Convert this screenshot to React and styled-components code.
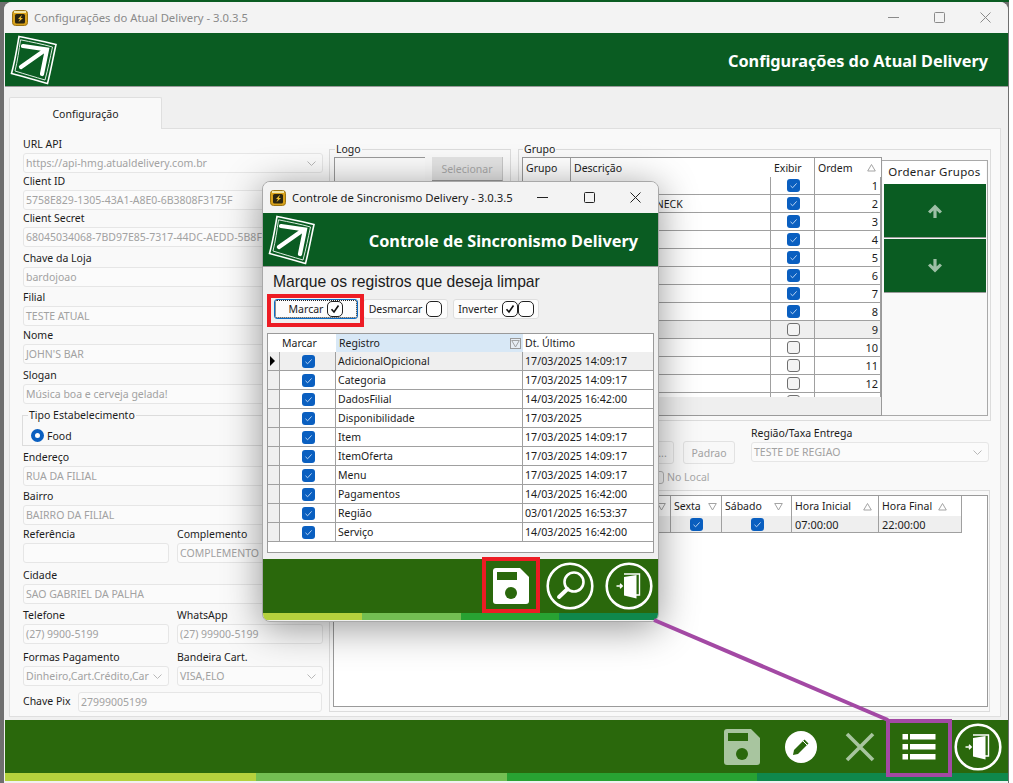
import React from 'react';
import styled, { createGlobalStyle } from 'styled-components';

const Global = createGlobalStyle`
  html, body { margin: 0; padding: 0; background: #fff; }
  * { box-sizing: border-box; }
  body { font-family: "Noto Sans", "Liberation Sans", sans-serif; font-size: 10.5px; color: #1c1c1c; }
`;

const Screen = styled.div`
  position: relative; width: 1013px; height: 783px; overflow: hidden; background: #fff;
  display: flex; align-items: stretch;
`;
const Desktop = styled.div`
  width: 1009px; height: 783px; background: #6f6f6f; display: flex; flex-direction: column;
  padding-left: 4px; border-top: 2px solid #0a5c22;
`;
const Win = styled.div`
  flex: 1; width: 1004px; background: #f0f0f0; display: flex; flex-direction: column;
  border-top-left-radius: 8px; border-top-right-radius: 8px; overflow: hidden;
`;
const TitleBar = styled.div`
  height: ${p => p.$h}px; flex: none; background: ${p => p.$bg}; display: flex; align-items: center;
  padding-left: ${p => p.$pl}px; gap: 6px; font-size: 11.3px; color: ${p => p.$color}; font-family: "Noto Sans", sans-serif;
`;
const TitleText = styled.span` flex: 1; white-space: nowrap; `;
const WinButtons = styled.div` display: flex; height: 100%; `;
const WinBtn = styled.div`
  width: ${p => p.$w}px; display: flex; align-items: center; justify-content: center; color: ${p => p.$color};
`;
const Banner = styled.div`
  height: 54px; flex: none; background: #0a5c22; display: flex; align-items: center; justify-content: space-between;
  padding: 0 20px 0 ${p => p.$pl}px; margin-left: ${p => p.$ml || 0}px; border-bottom: 1px solid #9a9a9a;
`;
const BannerTitle = styled.div`
  color: #fff; font-family: "Noto Sans", sans-serif; font-weight: 700; font-size: ${p => p.$size}px; white-space: nowrap;
  padding-top: ${p => p.$pt}px;
`;
const Content = styled.div`
  flex: 1; display: flex; flex-direction: column; padding: 10px 7px 3px 5px; min-height: 0;
`;
const Tabs = styled.div` display: flex; height: 31px; flex: none; `;
const Tab = styled.div`
  width: 153px; height: 32px; background: #f9f9f9; border: 1px solid #dfdfdf; border-bottom: none; border-radius: 2px 2px 0 0;
  display: flex; align-items: center; justify-content: center; color: #222; z-index: 1;
`;
const Panel = styled.div`
  flex: 1; background: #f9f9f9; border: 1px solid #dfdfdf; display: grid;
  grid-template-columns: 301px 662px; column-gap: 6px; padding: 8px 0 0 12px; min-height: 0;
`;
const LeftCol = styled.div` display: flex; flex-direction: column; `;
const Field = styled.div`
  display: flex; flex-direction: column; margin-top: ${p => p.$mt || 0}px; width: ${p => p.$w ? p.$w + 'px' : 'auto'}; min-width: 0;
`;
const Label = styled.label`
  height: 16px; line-height: 14px; padding-left: 1px; white-space: nowrap; color: #1c1c1c;
`;
const InputBox = styled.div`
  height: 20px; background: #fbfbfb; border: 1px solid #e6e6e6; border-radius: 3px; display: flex; align-items: center;
  justify-content: space-between; padding: 0 6px 0 2px; color: #a2a2a2; white-space: nowrap; overflow: hidden; flex: none; min-width: 0; margin-left: 1px;
`;
const TwoCols = styled.div`
  display: grid; grid-template-columns: 147px 147px; column-gap: 7px; margin-top: ${p => p.$mt}px;
`;
const PixRow = styled.div`
  display: grid; grid-template-columns: 55px 245px; height: 20px; margin-top: 6px; align-items: center;
`;
const Chevron = styled.svg` flex: none; width: 9px; height: 5px; margin-left: 3px; `;
const Group = styled.fieldset`
  margin: ${p => p.$mt || 0}px 0 0 0; padding: ${p => p.$pad || '0 2px 2px 3px'}; border: 1px solid #dcdcdc; min-width: 0; height: ${p => p.$h}px; width: ${p => p.$w ? p.$w + 'px' : 'auto'};
  display: ${p => p.$flex ? 'flex' : 'block'}; gap: 7px;
`;
const Legend = styled.legend`
  padding: 0 1px; margin-left: ${p => p.$ml ?? 2}px; line-height: 13px; height: 13px; color: #1c1c1c; margin-bottom: ${p => p.$mb ?? 1}px;
`;
const RadioRow = styled.div` display: flex; align-items: center; gap: 3px; padding-left: 8px; height: 15px; `;
const Radio = styled.span`
  width: 13px; height: 13px; border-radius: 50%; border: 4px solid #0a5fc0; background: #fff; display: inline-block;
`;
const RightCol = styled.div` display: flex; flex-direction: column; min-width: 0; padding-top: 6px;`;
const TopRow = styled.div` display: flex; gap: 7px; `;
const LogoPreview = styled.div`
  width: 91px; height: 40px; background: #fbfbfb; border-top: 1px solid #9a9a9a; border-left: 1px solid #9a9a9a; flex: none;
`;
const SelectBtn = styled.div`
  width: 71px; height: 24px; background: #e4e4e4; color: #a8a8a8; border-bottom: 1px solid #9a9a9a; border-right: 1px solid #c8c8c8; display: flex; align-items: center; justify-content: center; flex: none;
`;
const GrupoWrap = styled.div` display: flex; height: 259px; `;
const GridBox = styled.div`
  width: ${p => p.$w}px; background: ${p => p.$bg || '#fff'}; border: 1px solid #9a9a9a; display: flex; flex-direction: column; overflow: hidden; flex: none; height: ${p => p.$h ? p.$h + 'px' : 'auto'};
  margin-top: ${p => p.$mt || 0}px;
`;
const GroupRows = styled.div` flex: none; height: 220px; overflow: hidden; background: #fff; `;
const Row = styled.div`
  display: grid; grid-template-columns: ${p => p.$cols}; height: ${p => p.$h}px; flex: none; background: ${p => p.$bg || 'transparent'}; width: ${p => p.$w ? p.$w + 'px' : 'auto'};
`;
const Cell = styled.div`
  display: flex; align-items: center; justify-content: ${p => p.$align || 'flex-start'};
  padding: 0 ${p => p.$pr ?? 2}px 0 ${p => p.$pl ?? 3}px; white-space: nowrap; overflow: hidden; position: relative;
  border-right: ${p => p.$noline ? 'none' : (p.$head && !p.$line ? 'none' : '1px solid #a0a0a0')};
  border-bottom: ${p => p.$head ? 'none' : '1px solid #a0a0a0'};
  background: ${p => p.$bg || 'transparent'}; color: #1c1c1c; font-size: ${p => p.$fs || 10.5}px;
`;
const HeadCell = styled(Cell).attrs({ $head: true })` justify-content: ${p => p.$align || 'space-between'}; `;
const Fill = styled.div` flex: 1; background: #efefef; `;
const SideBox = styled.div`
  flex: 1; border: 1px solid #a9a9a9; border-left: none; background: #f9f9f9; margin-top: 3px; display: flex; flex-direction: column;
`;
const SideTitle = styled.div`
  height: 23px; display: flex; align-items: center; justify-content: center; background: #fff; font-size: 11.5px; letter-spacing: .3px; margin: 0 1px;
  white-space: nowrap; flex: none; padding-bottom: 2px;
`;
const SideBtn = styled.div`
  height: 54px; background: #0a5c22; border-bottom: 1px solid #9a9a9a; margin: 0 1px 1px 2px; display: flex; align-items: center; justify-content: center; flex: none;
`;
const MidRow = styled.div`
  display: flex; justify-content: flex-end; gap: 15px; height: 69px; padding: 5px 2px 0 0; flex: none;
`;
const MidCol = styled.div` display: flex; flex-direction: column; width: 84px; `;
const MidBtns = styled.div` display: flex; gap: 9px; margin-top: 15px; `;
const GhostBtn = styled.div`
  width: ${p => p.$w}px; height: 23px; background: #f8f8f8; border: 1px solid #e2e2e2; border-radius: 3px; display: flex; align-items: center; justify-content: center; color: #a2a2a2; flex: none;
`;
const LocalRow = styled.div` display: flex; align-items: center; gap: 3px; color: #a8a8a8; margin-top: 6px; `;
const SmallBox = styled.span`
  width: 13px; height: 13px; border-radius: 3px; border: 1px solid #b8b8b8; display: inline-block; background: #f7f7f7; flex: none;
`;
const BottomBox = styled.div` height: 222px; border: 1px solid #dcdcdc; padding: 4px 1px 4px 3px; flex: none; width: 661px; `;
const Footer = styled.div`
  height: ${p => p.$h}px; flex: none; background: #2a680c; display: flex; justify-content: flex-end; align-items: center;
  padding-right: ${p => p.$pr || 0}px; margin-left: ${p => p.$ml || 0}px;
`;
const Slot = styled.div` width: 59px; height: 100%; display: flex; align-items: center; justify-content: center; flex: none; `;
const Strip = styled.div` height: ${p => p.$h}px; flex: none; display: flex; margin-left: ${p => p.$ml || 0}px; `;
const StripPart = styled.div` flex: 1; background: ${p => p.$c}; `;

const Dialog = styled.div`
  position: absolute; left: 262px; top: 181px; width: 397px; height: 441px; background: #f0f0f0; border-radius: 8px; overflow: hidden;
  border: 1px solid #a8a8a8; box-shadow: 0 6px 38px rgba(0,0,0,.42); display: flex; flex-direction: column; z-index: 5; padding-bottom: 1px;
`;
const DialogBody = styled.div` flex: 1; padding: 4px 4px 6px 4px; display: flex; flex-direction: column; min-height: 0; `;
const Prompt = styled.div` font-family: "Liberation Sans", sans-serif; font-size: 15.7px; height: 22px; line-height: 22px; padding-left: 6px; color: #1c1c1c; `;
const Toolbar = styled.div` display: flex; gap: 5px; padding-left: 7px; margin-top: 6px; height: 20px; flex: none; `;
const ToolBtn = styled.div`
  width: ${p => p.$w}px; height: 20px; background: #fcfcfc; border: 1px solid ${p => p.$focus ? '#0a6cc8' : '#dedede'}; border-radius: 3px; display: flex; align-items: center; justify-content: center; gap: 4px;
  position: relative; color: #222; font-size: 10.5px; flex: none;
  ${p => p.$focus ? 'outline: 1px dotted #222; outline-offset: -2px;' : ''}
`;
const TickBox = styled.span`
  width: 16px; height: 16px; border: 1.6px solid #222; border-radius: 5px; display: inline-flex; align-items: center; justify-content: center; flex: none; background: #fff;
`;
const TickPair = styled.span` display: inline-flex; `;
const Mark = styled.div`
  position: absolute; left: ${p => p.$x}px; top: ${p => p.$y}px; width: ${p => p.$w}px; height: ${p => p.$h}px;
  border: ${p => p.$b}px solid ${p => p.$c}; z-index: ${p => p.$z}; pointer-events: none;
`;
const Leader = styled.svg` position: absolute; left: 640px; top: 600px; width: 270px; height: 140px; z-index: 6; pointer-events: none; `;
const Checked = styled.span`
  width: 13px; height: 13px; background: #0a5fc0; border-radius: 3px; display: inline-flex; align-items: center; justify-content: center; flex: none;
`;
const Unchecked = styled.span`
  width: 13px; height: 13px; background: #f4f4f4; border: 1px solid #6f6f6f; border-radius: 3px; display: inline-block; flex: none;
`;
const Indicator = styled.span`
  width: 0; height: 0; border-left: 5px solid #000; border-top: 5px solid transparent; border-bottom: 5px solid transparent; display: inline-block;
`;
const HeadFilter = styled.span` display: inline-flex; width: 11px; height: 11px; border: 1px solid #9a9a9a; align-items: center; justify-content: center; background: #e8eef4; `;

const CheckBox = ({ on }) => on ? (
  <Checked><svg width="9" height="9" viewBox="0 0 9 9"><path d="M1.5 4.8 3.6 6.8 7.6 2.4" fill="none" stroke="#b9d4f3" strokeWidth="1" /></svg></Checked>
) : <Unchecked />;
const Tick = () => <svg width="10" height="10" viewBox="0 0 10 10"><path d="M1.5 5.2 4 8 8.5 1.5" fill="none" stroke="#111" strokeWidth="1.6" /></svg>;
const Sort = ({ down }) => <svg width="9" height="9" viewBox="0 0 9 9"><path d={down ? 'M.7 1.5H8.3L4.5 8Z' : 'M.7 8H8.3L4.5 1.5Z'} fill="none" stroke="#9a9a9a" strokeWidth=".9" /></svg>;
const ChevronIcon = () => <Chevron viewBox="0 0 9 5"><path d="M.5.5 4.5 4.5 8.5.5" fill="none" stroke="#b8b8b8" /></Chevron>;

const AppIcon = () => (
  <svg width="16" height="16" viewBox="0 0 16 16" style={{ flex: 'none' }}>
    <rect x=".5" y=".5" width="15" height="15" rx="3" fill="#d9a21b" stroke="#9a7414" />
    <rect x="2" y="1" width="12" height="2" fill="#f4e7a6" />
    <rect x="3" y="4" width="10" height="9.5" rx="1.5" fill="#2b2510" />
    <path d="M10 4.8 6 9h2l-1.6 3.2L11 8H8.8Z" fill="#f0c030" />
  </svg>
);
const Logo = () => (
  <svg width="50" height="52" viewBox="0 0 50 52" style={{ flex: 'none' }}>
    <path d="M10 2.5C22 5 34 7 47 10.5 44 24 42 36 38.5 49.5 26 46 14 42.5 2.5 39.5 6 27 8 14 10 2.5Z" fill="none" stroke="#fff" strokeWidth="1.6" />
    <path d="M11.5 5.8C22 8 33 10 43.5 13 41 24 39 35 36 46 26 43 15.5 40 6 37 8.5 27 10 16 11.5 5.8Z" fill="none" stroke="#dfeee3" strokeWidth="1" />
    <path d="M12 33 35.5 16.5M14 12 38 15.5 33 40" fill="none" stroke="#fff" strokeWidth="4.2" strokeLinecap="round" strokeLinejoin="miter" />
  </svg>
);
const SaveIcon = ({ color, bg }) => (
  <svg width="36" height="36" viewBox="0 0 36 36">
    <path d="M3 0H27L36 9V33a3 3 0 0 1-3 3H3a3 3 0 0 1-3-3V3A3 3 0 0 1 3 0Z" fill={color} />
    <rect x="4" y="4" width="20" height="8" fill={bg} />
    <circle cx="18" cy="25" r="6" fill={bg} />
  </svg>
);
const Ring = ({ children }) => (
  <svg width="48" height="48" viewBox="0 0 48 48">
    <circle cx="24" cy="24" r="22.3" fill="none" stroke="#fff" strokeWidth="2.6" />
    {children}
  </svg>
);
const SearchIcon = () => (
  <Ring>
    <circle cx="28" cy="20" r="9.5" fill="none" stroke="#fff" strokeWidth="2.6" />
    <path d="M21.5 27 13 35" stroke="#fff" strokeWidth="4" strokeLinecap="round" />
  </Ring>
);
const ExitIcon = () => (
  <Ring>
    <path d="M19 12H34.5V33H31" fill="none" stroke="#fff" strokeWidth="1.4" />
    <path d="M19 15 31.5 13V36.5L19 33.5Z" fill="#fff" />
    <path d="M11.5 24H17M15 21.8 17.2 24 15 26.2" fill="none" stroke="#fff" strokeWidth="1.5" />
  </Ring>
);
const EditIcon = () => (
  <svg width="32" height="32" viewBox="0 0 32 32">
    <circle cx="16" cy="16" r="16" fill="#fff" />
    <path d="M19.5 8.5 23.5 12.5 13 23 8 24 9 19Z" fill="#2a680c" />
    <path d="M18 10 22 14" stroke="#fff" strokeWidth="1" />
  </svg>
);
const CloseIcon = () => (
  <svg width="30" height="30" viewBox="0 0 30 30"><path d="M2 2 28 28M28 2 2 28" stroke="#a8c59f" strokeWidth="3.6" /></svg>
);
const ListIcon = () => (
  <svg width="34" height="28" viewBox="0 0 34 28">
    {[1, 11, 21].map(y => (
      <g key={y} fill="#fff">
        <rect x="0.5" y={y} width="5.5" height="5.5" />
        <rect x="8" y={y} width="25.5" height="5.5" />
      </g>
    ))}
  </svg>
);
const Arrow = ({ down }) => (
  <svg width="16" height="16" viewBox="0 0 16 16" style={{ transform: down ? 'rotate(180deg)' : 'none' }}>
    <path d="M8 1.5 15 8.5 12.8 10.5 9.6 7.5V15H6.4V7.5L3.2 10.5 1 8.5Z" fill="#9dbfa6" />
  </svg>
);

const TextField = ({ label, value, mt, select, w }) => (
  <Field $mt={mt} $w={w}>
    <Label>{label}</Label>
    <InputBox><span>{value}</span>{select && <ChevronIcon />}</InputBox>
  </Field>
);

const groupCols = '48px 200px 44px 66px';
const groupRows = Array.from({ length: 13 }, (_, i) => i + 1);
const regs = [
  ['AdicionalOpicional', '17/03/2025 14:09:17'],
  ['Categoria', '17/03/2025 14:09:17'],
  ['DadosFilial', '14/03/2025 16:42:00'],
  ['Disponibilidade', '17/03/2025'],
  ['Item', '17/03/2025 14:09:17'],
  ['ItemOferta', '17/03/2025 14:09:17'],
  ['Menu', '17/03/2025 14:09:17'],
  ['Pagamentos', '14/03/2025 16:42:00'],
  ['Região', '03/01/2025 16:53:37'],
  ['Serviço', '14/03/2025 16:42:00'],
];
const regCols = '12px 56px 187px 130px';
const hourCols = '337px 51px 70px 87px 83px';

export default function App() {
  return (
    <Screen>
      <Global />
      <Desktop>
        <Win>
          <TitleBar $h={31} $bg="#f3f3f3" $pl={8} $color="#8a8a8a">
            <AppIcon />
            <TitleText>Configurações do Atual Delivery - 3.0.3.5</TitleText>
            <WinButtons>
              <WinBtn $w={46} $color="#8a8a8a"><svg width="11" height="11" viewBox="0 0 11 11"><path d="M0 5.5H11" stroke="currentColor" /></svg></WinBtn>
              <WinBtn $w={46} $color="#8a8a8a"><svg width="11" height="11" viewBox="0 0 11 11"><rect x=".5" y=".5" width="10" height="10" rx="1" fill="none" stroke="currentColor" /></svg></WinBtn>
              <WinBtn $w={46} $color="#8a8a8a"><svg width="11" height="11" viewBox="0 0 11 11"><path d="M.5.5 10.5 10.5M10.5.5.5 10.5" stroke="currentColor" /></svg></WinBtn>
            </WinButtons>
          </TitleBar>
          <Banner $pl={4} $ml={1}>
            <Logo />
            <BannerTitle $size={16.3} $pt={2}>Configurações do Atual Delivery</BannerTitle>
          </Banner>
          <Content>
            <Tabs><Tab>Configuração</Tab></Tabs>
            <Panel>
              <LeftCol>
                <TextField label="URL API" value="https://api-hmg.atualdelivery.com.br" select />
                <TextField label="Client ID" mt={1} value="5758E829-1305-43A1-A8E0-6B3808F3175F" />
                <TextField label="Client Secret" mt={1} value="68045034068-7BD97E85-7317-44DC-AEDD-5B8F" />
                <TextField label="Chave da Loja" mt={4} value="bardojoao" />
                <TextField label="Filial" mt={3} value="TESTE ATUAL" select />
                <TextField label="Nome" mt={2} value="JOHN'S BAR" />
                <TextField label="Slogan" mt={4} value="Música boa e cerveja gelada!" />
                <Group $mt={5} $h={37} $pad="0 2px 0 0">
                  <Legend $mb={6} $ml={5}>Tipo Estabelecimento</Legend>
                  <RadioRow><Radio />Food</RadioRow>
                </Group>
                <TextField label="Endereço" mt={4} value="RUA DA FILIAL" />
                <TextField label="Bairro" mt={3} value="BAIRRO DA FILIAL" />
                <TwoCols $mt={2}>
                  <TextField label="Referência" value=" " />
                  <TextField label="Complemento" value="COMPLEMENTO F" />
                </TwoCols>
                <TextField label="Cidade" mt={5} value="SAO GABRIEL DA PALHA" />
                <TwoCols $mt={4}>
                  <TextField label="Telefone" value="(27) 9900-5199" />
                  <TextField label="WhatsApp" value="(27) 99900-5199" />
                </TwoCols>
                <TwoCols $mt={6}>
                  <TextField label="Formas Pagamento" value="Dinheiro,Cart.Crédito,Car" select />
                  <TextField label="Bandeira Cart." value="VISA,ELO" select />
                </TwoCols>
                <PixRow>
                  <Label>Chave Pix</Label>
                  <InputBox>27999005199</InputBox>
                </PixRow>
              </LeftCol>
              <RightCol>
                <TopRow>
                  <Group $w={182} $h={278} $flex $pad="0 7px 0 4px">
                    <Legend $ml={1}>Logo</Legend>
                    <LogoPreview />
                    <SelectBtn>Selecionar</SelectBtn>
                  </Group>
                  <Group $w={473} $h={278}>
                    <Legend $ml={1}>Grupo</Legend>
                    <GrupoWrap>
                      <GridBox $w={360} $bg="#f0f0f0">
                        <Row $cols={groupCols} $h={19} $bg="#fff">
                          <HeadCell $line>Grupo</HeadCell>
                          <HeadCell>Descrição</HeadCell>
                          <HeadCell $line>Exibir</HeadCell>
                          <HeadCell $pr={5}>Ordem<Sort /></HeadCell>
                        </Row>
                        <GroupRows>
                          {groupRows.map(n => (
                            <Row key={n} $cols={groupCols} $h={18} $bg={n === 9 ? '#efefef' : '#fff'}>
                              <Cell />
                              <Cell>{n === 2 ? 'CERVEJAS LONG NECK' : ''}</Cell>
                              <Cell $align="center"><CheckBox on={n <= 8} /></Cell>
                              <Cell $align="flex-end" $fs={11}>{n < 13 ? n : ''}</Cell>
                            </Row>
                          ))}
                        </GroupRows>
                        <Fill />
                      </GridBox>
                      <SideBox>
                        <SideTitle>Ordenar Grupos</SideTitle>
                        <SideBtn><Arrow /></SideBtn>
                        <SideBtn><Arrow down /></SideBtn>
                      </SideBox>
                    </GrupoWrap>
                  </Group>
                </TopRow>
                <MidRow>
                  <MidCol>
                    <MidBtns>
                      <GhostBtn $w={23}>...</GhostBtn>
                      <GhostBtn $w={52}>Padrao</GhostBtn>
                    </MidBtns>
                    <LocalRow><SmallBox />No Local</LocalRow>
                  </MidCol>
                  <TextField label="Região/Taxa Entrega" value="TESTE DE REGIAO" select w={239} />
                </MidRow>
                <BottomBox>
                  <GridBox $w={655} $h={212}>
                    <Row $cols={hourCols} $h={20}>
                      <HeadCell $pr={4} $line $align="flex-end"><Sort down /></HeadCell>
                      <HeadCell $pr={4} $line>Sexta<Sort down /></HeadCell>
                      <HeadCell $pr={8} $line>Sábado<Sort down /></HeadCell>
                      <HeadCell $pr={6} $line>Hora Inicial<Sort /></HeadCell>
                      <HeadCell $pr={14} $line>Hora Final<Sort /></HeadCell>
                    </Row>
                    <Row $cols={hourCols} $h={17} $w={628}>
                      <Cell $bg="#efefef" />
                      <Cell $bg="#efefef" $align="center"><CheckBox on /></Cell>
                      <Cell $bg="#efefef" $align="center"><CheckBox on /></Cell>
                      <Cell $bg="#efefef" $fs={11}>07:00:00</Cell>
                      <Cell $bg="#efefef" $fs={11}>22:00:00</Cell>
                    </Row>
                  </GridBox>
                </BottomBox>
              </RightCol>
            </Panel>
          </Content>
          <Footer $h={53} $pr={1} $ml={1}>
            <Slot><SaveIcon color="#a8c59f" bg="#2a680c" /></Slot>
            <Slot><EditIcon /></Slot>
            <Slot><CloseIcon /></Slot>
            <Slot><ListIcon /></Slot>
            <Slot><ExitIcon /></Slot>
          </Footer>
          <Strip $h={8} $ml={1}>
            <StripPart $c="#b5d13d" /><StripPart $c="#73bf52" /><StripPart $c="#28a232" /><StripPart $c="#0f884c" />
          </Strip>
          <Strip $h={2}><StripPart $c="#f0f0f0" /></Strip>
        </Win>
      </Desktop>

      <Dialog>
        <TitleBar $h={31} $bg="#f3f3f3" $pl={7} $color="#1c1c1c">
          <AppIcon />
          <TitleText>Controle de Sincronismo Delivery - 3.0.3.5</TitleText>
          <WinButtons>
            <WinBtn $w={47} $color="#222"><svg width="11" height="11" viewBox="0 0 11 11"><path d="M0 5.5H11" stroke="currentColor" /></svg></WinBtn>
            <WinBtn $w={46} $color="#222"><svg width="11" height="11" viewBox="0 0 11 11"><rect x=".5" y=".5" width="10" height="10" rx="1" fill="none" stroke="currentColor" /></svg></WinBtn>
            <WinBtn $w={46} $color="#222"><svg width="11" height="11" viewBox="0 0 11 11"><path d="M.5.5 10.5 10.5M10.5.5.5 10.5" stroke="currentColor" /></svg></WinBtn>
          </WinButtons>
        </TitleBar>
        <Banner $pl={4}>
          <Logo />
          <BannerTitle $size={16.3} $pt={2}>Controle de Sincronismo Delivery</BannerTitle>
        </Banner>
        <DialogBody>
          <Prompt>Marque os registros que deseja limpar</Prompt>
          <Toolbar>
            <ToolBtn $w={84} $focus>Marcar<TickBox><Tick /></TickBox></ToolBtn>
            <ToolBtn $w={85}>Desmarcar<TickBox /></ToolBtn>
            <ToolBtn $w={86}>Inverter<TickPair><TickBox><Tick /></TickBox><TickBox /></TickPair></ToolBtn>
          </Toolbar>
          <GridBox $w={387} $h={220} $mt={14}>
            <Row $cols={regCols} $h={18}>
              <HeadCell />
              <HeadCell $pl={2}>Marcar</HeadCell>
              <HeadCell $bg="#d8e8f6" $pr={2}>Registro<HeadFilter><Sort down /></HeadFilter></HeadCell>
              <HeadCell $pl={2}>Dt. Último</HeadCell>
            </Row>
            {regs.map(([name, date], i) => (
              <Row key={name} $cols={regCols} $h={19} $bg={i === 0 ? '#efefef' : '#fff'}>
                <Cell $bg="#efefef" $pl={2} $pr={0}>{i === 0 && <Indicator />}</Cell>
                <Cell $align="center"><CheckBox on /></Cell>
                <Cell $pl={2}>{name}</Cell>
                <Cell $pl={2} $fs={10.7} $noline>{date}</Cell>
              </Row>
            ))}
          </GridBox>
        </DialogBody>
        <Footer $h={54}>
          <Slot><SaveIcon color="#fff" bg="#2a680c" /></Slot>
          <Slot><SearchIcon /></Slot>
          <Slot><ExitIcon /></Slot>
        </Footer>
        <Strip $h={7}>
          <StripPart $c="#b5d13d" /><StripPart $c="#73bf52" /><StripPart $c="#28a232" /><StripPart $c="#0f884c" />
        </Strip>
      </Dialog>

      <Mark $x={267} $y={294} $w={97} $h={33} $b={4} $c="#ed1c24" $z={7} />
      <Mark $x={482} $y={557} $w={58} $h={56} $b={4} $c="#ed1c24" $z={7} />
      <Mark $x={886} $y={719} $w={66} $h={58} $b={4} $c="#a349a4" $z={7} />
      <Leader viewBox="0 0 270 140">
        <path d="M14 20 248 120" stroke="#a349a4" strokeWidth="4" />
      </Leader>
    </Screen>
  );
}
